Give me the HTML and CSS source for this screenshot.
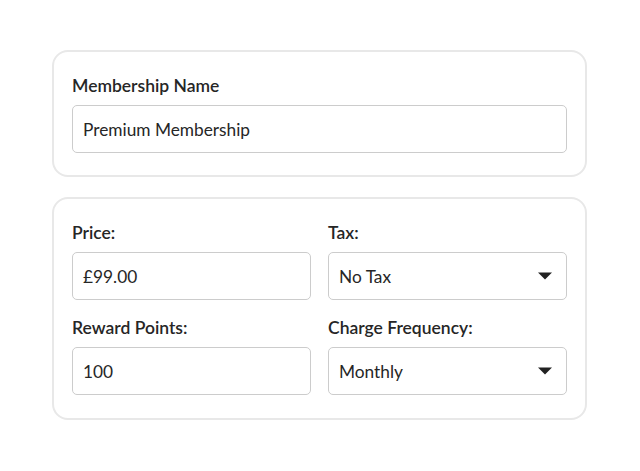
FILE: index.html
```html
<!DOCTYPE html>
<html lang="en">
<head>
    <meta charset="utf-8">
    <meta name="viewport" content="width=device-width, initial-scale=1.0">
    <title>Membership</title>
    <link rel="stylesheet" href="styles.css">
</head>
<body>
    <div class="wrap">
        <div class="card">
            <label class="label" for="name">Membership Name</label>
            <div class="field" id="name">Premium Membership</div>
        </div>

        <div class="card grid">
            <div class="group">
                <label class="label">Price:</label>
                <div class="field">£99.00</div>
            </div>
            <div class="group">
                <label class="label">Tax:</label>
                <div class="field select">
                    <span>No Tax</span>
                    <svg class="caret" width="14" height="8" viewBox="0 0 14 8"><path d="M0 0.5 L14 0.5 L7 7.5 Z" fill="#222"/></svg>
                </div>
            </div>
            <div class="group">
                <label class="label">Reward Points:</label>
                <div class="field">100</div>
            </div>
            <div class="group">
                <label class="label">Charge Frequency:</label>
                <div class="field select">
                    <span>Monthly</span>
                    <svg class="caret" width="14" height="8" viewBox="0 0 14 8"><path d="M0 0.5 L14 0.5 L7 7.5 Z" fill="#222"/></svg>
                </div>
            </div>
        </div>
    </div>
</body>
</html>
```

FILE: styles.css
```css
body {
    margin: 0;
    background: #fff;
    font-family: Lato, "Open Sans", sans-serif;
    color: #262626;
}
.wrap {
    width: 535px;
    margin: 50px 0 0 52px;
    display: flex;
    flex-direction: column;
    gap: 20px;
}
.card {
    border: 2px solid #e8e8e8;
    border-radius: 16px;
    padding: 24px 18px 22px;
}
.grid {
    display: grid;
    grid-template-columns: 1fr 1fr;
    column-gap: 17px;
    row-gap: 18px;
    padding-bottom: 23px;
}
.label {
    display: block;
    font-size: 17.5px;
    line-height: 20px;
    font-weight: 600;
    margin-bottom: 9px;
}
.field {
    box-sizing: border-box;
    height: 48px;
    border: 1.5px solid #cccccc;
    border-radius: 5px;
    padding: 0 14px 0 10px;
    display: flex;
    align-items: center;
    font-size: 17.3px;
}
.select {
    justify-content: space-between;
}
.caret {
    display: block;
}
```
